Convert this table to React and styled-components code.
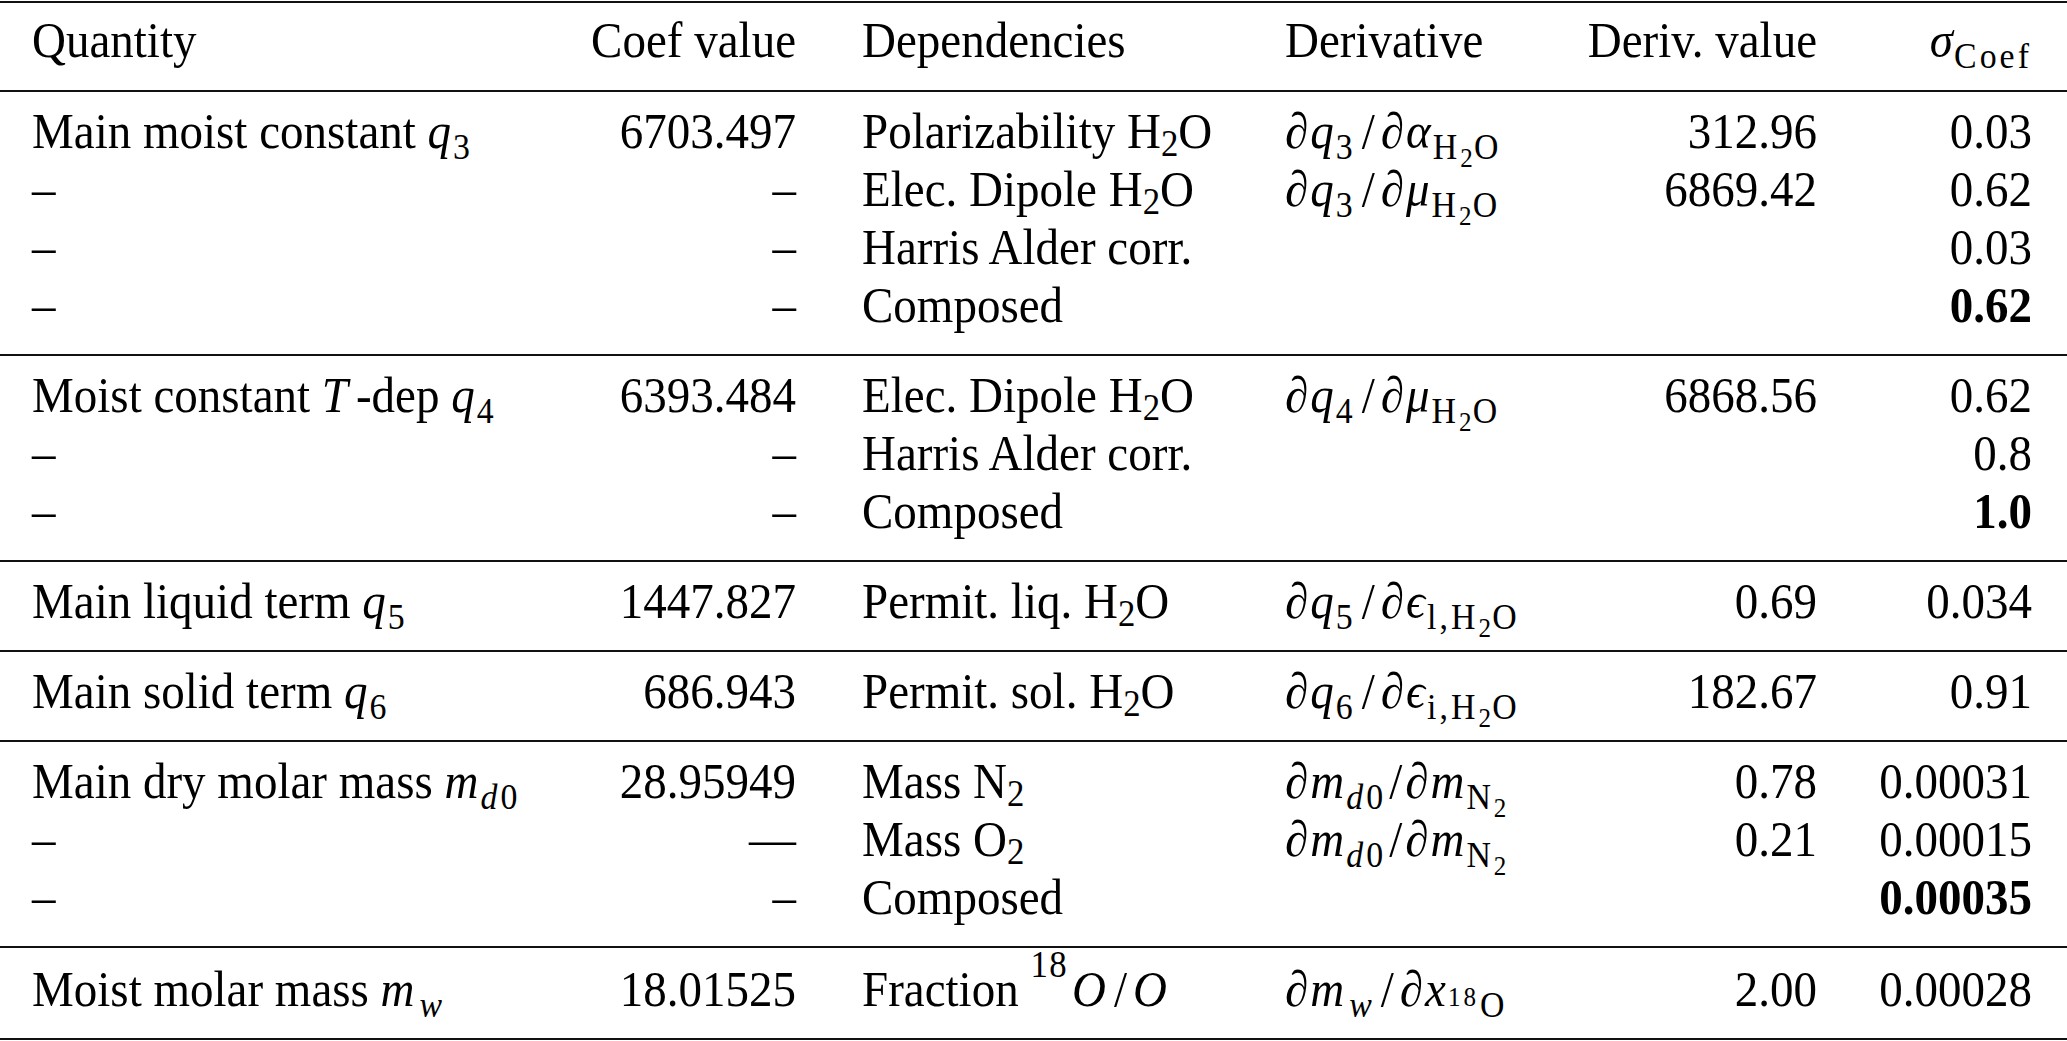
import React from 'react';
import styled, { createGlobalStyle } from 'styled-components';

const GlobalStyle = createGlobalStyle`
  html, body {
    margin: 0;
    padding: 0;
    background: #fff;
  }
  body {
    font-family: 'Liberation Serif', 'DejaVu Serif', serif;
    color: #000;
  }
`;

const Page = styled.div`
  width: 2067px;
  height: 1041px;
  padding-top: 1px;
  box-sizing: border-box;
  overflow: hidden;
  font-size: 47px;
`;

const Section = styled.div`
  padding: ${(p) => p.$pt}px 0 ${(p) => p.$pb}px;
  border-top: ${(p) => (p.$top ? '2px solid #111' : 'none')};
  border-bottom: 2px solid #111;
`;

// the TeX font in the picture is a little taller than Liberation Serif,
// so each row is stretched upward from its baseline
const Row = styled.div`
  display: grid;
  grid-template-columns: 480px 284px 489px 300px 232px 215px;
  padding: 0 35px 0 32px;
  height: 58px;
  line-height: 58px;
  white-space: nowrap;
  transform: scaleY(1.08);
  transform-origin: 0 45px;
`;

const Cell = styled.div`
  text-align: ${(p) => p.$align || 'left'};
  padding-left: ${(p) => p.$indent || 0}px;
`;

// math italic letter
const M = styled.i`
  font-style: italic;
  margin-right: ${(p) => p.$r ?? 2}px;
  margin-left: ${(p) => p.$l || 0}px;
`;

const D = styled.span`
  font-style: italic;
  margin-right: 2px;
`;

// math subscript
const Sub = styled.span`
  font-size: 0.72em;
  letter-spacing: 0.09em;
  vertical-align: -0.3em;
  line-height: 0;
  font-style: normal;
`;

// second level subscript (inside Sub)
const Sub2 = styled.span`
  font-size: 0.74em;
  letter-spacing: 0.05em;
  vertical-align: -0.3em;
  line-height: 0;
`;

const Sup2 = styled.span`
  font-size: 0.74em;
  vertical-align: 0.4em;
  line-height: 0;
  margin-right: 1px;
`;

// text-mode subscript, as in H2O
const TSub = styled.span`
  font-size: 0.74em;
  vertical-align: -0.2em;
  line-height: 0;
`;

const TSup = styled.span`
  font-size: 0.74em;
  letter-spacing: 0.04em;
  vertical-align: 0.78em;
  line-height: 0;
  margin-right: 4px;
`;

const Slash = styled.span`
  margin: 0 ${(p) => p.$gap ?? 6}px;
`;

const H2O = () => (
  <>
    H<TSub>2</TSub>O
  </>
);

const SubH2O = () => (
  <Sub>
    H<Sub2>2</Sub2>O
  </Sub>
);

const dash = '–';

const rows = [
  [
    [
      <>Main moist constant <M>q</M><Sub>3</Sub></>,
      '6703.497',
      <>Polarizability <H2O /></>,
      <><D>∂</D><M>q</M><Sub>3</Sub><Slash>/</Slash><D>∂</D><M>α</M><SubH2O /></>,
      '312.96',
      '0.03',
    ],
    [
      dash,
      dash,
      <>Elec. Dipole <H2O /></>,
      <><D>∂</D><M>q</M><Sub>3</Sub><Slash>/</Slash><D>∂</D><M>μ</M><SubH2O /></>,
      '6869.42',
      '0.62',
    ],
    [dash, dash, 'Harris Alder corr.', '', '', '0.03'],
    [dash, dash, 'Composed', '', '', <b key="b">0.62</b>],
  ],
  [
    [
      <>Moist constant <M $r={8}>T</M>-dep <M>q</M><Sub>4</Sub></>,
      '6393.484',
      <>Elec. Dipole <H2O /></>,
      <><D>∂</D><M>q</M><Sub>4</Sub><Slash>/</Slash><D>∂</D><M>μ</M><SubH2O /></>,
      '6868.56',
      '0.62',
    ],
    [dash, dash, 'Harris Alder corr.', '', '', '0.8'],
    [dash, dash, 'Composed', '', '', <b key="b">1.0</b>],
  ],
  [
    [
      <>Main liquid term <M>q</M><Sub>5</Sub></>,
      '1447.827',
      <>Permit. liq. <H2O /></>,
      <><D>∂</D><M>q</M><Sub>5</Sub><Slash>/</Slash><D>∂</D><M>ϵ</M><Sub>l,H<Sub2>2</Sub2>O</Sub></>,
      '0.69',
      '0.034',
    ],
  ],
  [
    [
      <>Main solid term <M>q</M><Sub>6</Sub></>,
      '686.943',
      <>Permit. sol. <H2O /></>,
      <><D>∂</D><M>q</M><Sub>6</Sub><Slash>/</Slash><D>∂</D><M>ϵ</M><Sub>i,H<Sub2>2</Sub2>O</Sub></>,
      '182.67',
      '0.91',
    ],
  ],
  [
    [
      <>Main dry molar mass <M>m</M><Sub><M $r={0}>d</M>0</Sub></>,
      '28.95949',
      <>Mass N<TSub>2</TSub></>,
      <><D>∂</D><M>m</M><Sub><M $r={0}>d</M>0</Sub><Slash $gap={3}>/</Slash><D>∂</D><M>m</M><Sub>N<Sub2>2</Sub2></Sub></>,
      '0.78',
      '0.00031',
    ],
    [
      dash,
      '—',
      <>Mass O<TSub>2</TSub></>,
      <><D>∂</D><M>m</M><Sub><M $r={0}>d</M>0</Sub><Slash $gap={3}>/</Slash><D>∂</D><M>m</M><Sub>N<Sub2>2</Sub2></Sub></>,
      '0.21',
      '0.00015',
    ],
    [dash, dash, 'Composed', '', '', <b key="b">0.00035</b>],
  ],
  [
    [
      <>Moist molar mass <M>m</M><Sub><M $l={3} $r={0}>w</M></Sub></>,
      '18.01525',
      <>Fraction <TSup>18</TSup><M>O</M><Slash $gap={6}>/</Slash><M>O</M></>,
      <><D>∂</D><M>m</M><Sub><M $l={3} $r={0}>w</M></Sub><Slash>/</Slash><D>∂</D><M>x</M><Sub><Sup2>18</Sup2>O</Sub></>,
      '2.00',
      '0.00028',
    ],
  ],
];

const paddings = [
  [11, 19],
  [11, 19],
  [11, 19],
  [11, 19],
  [11, 19],
  [13, 19],
];

const DataRow = ({ cells }) => (
  <Row>
    <Cell>{cells[0]}</Cell>
    <Cell $align="right">{cells[1]}</Cell>
    <Cell $indent={66}>{cells[2]}</Cell>
    <Cell>{cells[3]}</Cell>
    <Cell $align="right">{cells[4]}</Cell>
    <Cell $align="right">{cells[5]}</Cell>
  </Row>
);

const App = () => (
  <>
    <GlobalStyle />
    <Page>
      <Section $top $pt={9} $pb={20}>
        <Row>
          <Cell>Quantity</Cell>
          <Cell $align="right">Coef value</Cell>
          <Cell $indent={66}>Dependencies</Cell>
          <Cell>Derivative</Cell>
          <Cell $align="right">Deriv. value</Cell>
          <Cell $align="right">
            <M $r={1}>σ</M>
            <Sub>Coef</Sub>
          </Cell>
        </Row>
      </Section>
      {rows.map((group, i) => (
        <Section key={i} $pt={paddings[i][0]} $pb={paddings[i][1]}>
          {group.map((cells, j) => (
            <DataRow key={j} cells={cells} />
          ))}
        </Section>
      ))}
    </Page>
  </>
);

export default App;
